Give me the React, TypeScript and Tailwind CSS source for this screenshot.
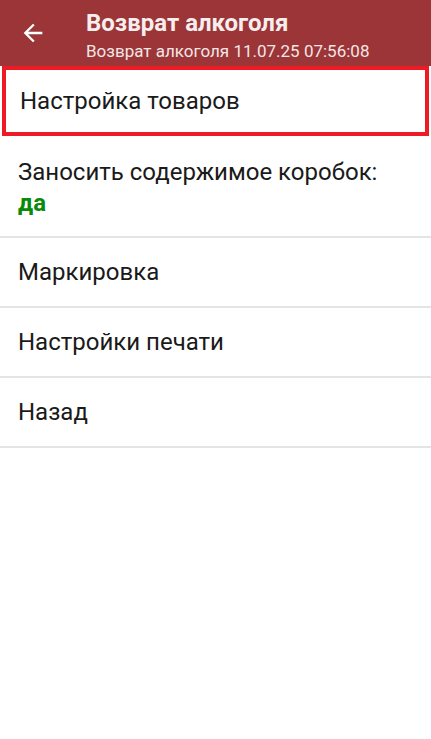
export default function App() {
  const rows = ["Маркировка", "Настройки печати", "Назад"];
  return (
    <div className="w-[431px] h-[739px] bg-white" style={{ fontFamily: "Roboto, 'Noto Sans', sans-serif" }}>
      {/* Шапка */}
      <div className="h-[66px] bg-[#9b3537] flex items-start">
        <div className="w-[86px] h-[66px] flex items-center pl-[19px]">
          <svg width="28" height="28" viewBox="0 0 24 24" fill="white">
            <path d="M20 11H7.83l5.59-5.59L12 4l-8 8 8 8 1.41-1.41L7.83 13H20v-2z" />
          </svg>
        </div>
        <div className="flex flex-col pt-[9px]">
          <div className="text-[24px] leading-[28px] font-bold text-[#f6eeee]">Возврат алкоголя</div>
          <div className="text-[17px] leading-[20px] text-[#f3e6e6] mt-[4px]">Возврат алкоголя 11.07.25 07:56:08</div>
        </div>
      </div>

      {/* Выделенный пункт */}
      <div className="mx-[2px] h-[70px] border-[4px] border-[#ed1c24] flex items-center pl-[14px]">
        <span className="text-[24px] text-[#1a1a1a]">Настройка товаров</span>
      </div>

      {/* Заносить содержимое */}
      <div className="h-[102px] border-b-2 border-[#e4e4e4] flex flex-col justify-center pl-[18px] pt-[3px]">
        <span className="text-[24px] leading-[31px] text-[#1a1a1a]">Заносить содержимое коробок:</span>
        <span className="text-[24px] leading-[31px] font-bold text-[#0a8a0a]">да</span>
      </div>

      {rows.map((r) => (
        <div key={r} className="h-[70px] border-b-2 border-[#e4e4e4] flex items-center pl-[18px]">
          <span className="text-[24px] text-[#1a1a1a]">{r}</span>
        </div>
      ))}
    </div>
  );
}
